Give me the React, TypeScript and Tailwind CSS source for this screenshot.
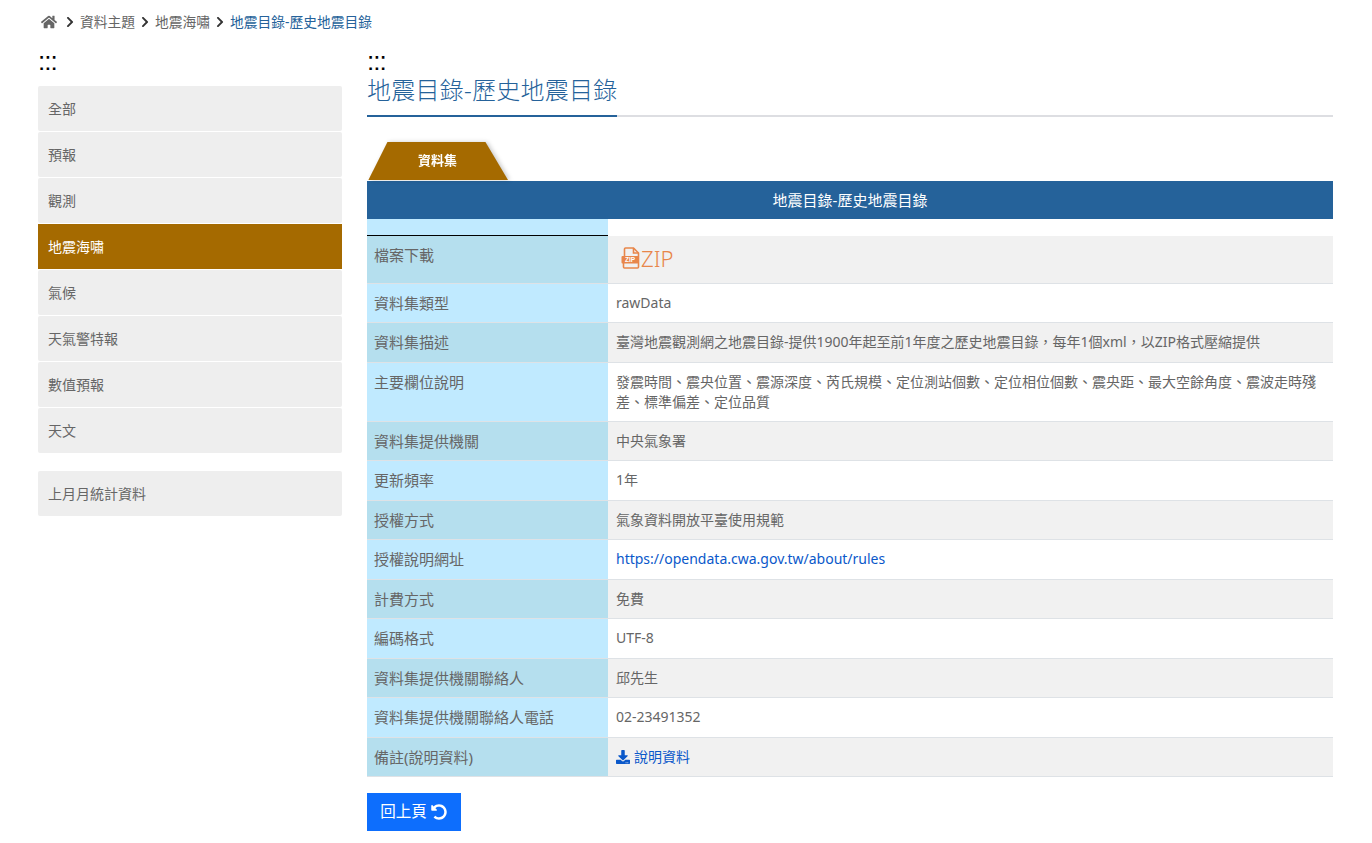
import { FaChevronRight, FaDownload, FaHome, FaUndoAlt } from 'react-icons/fa'

const fontStack = 'font-["Noto_Sans","Noto_Sans_CJK_TC",sans-serif]'

const menuItems = ['全部', '預報', '觀測', '地震海嘯', '氣候', '天氣警特報', '數值預報', '天文']

function Dots() {
  return (
    <div className='h-[22px] pt-[5px] font-["Liberation_Sans",sans-serif] text-[26px] leading-[20px] font-normal tracking-[-1px] text-black'>
      :::
    </div>
  )
}

function ZipIcon() {
  return (
    <svg width="20" height="22" viewBox="0 0 20 22" className="shrink-0">
      <path d="M3.5 9V2a1 1 0 0 1 1-1h8l5 5v14a1 1 0 0 1-1 1h-13a1 1 0 0 1-1-1v-4" fill="none" stroke="#e8864a" strokeWidth="1.6" />
      <path d="M12.5 1v5h5" fill="none" stroke="#e8864a" strokeWidth="1.6" />
      <rect x="0.5" y="9" width="17" height="7.5" rx="1" fill="#e8864a" />
      <text x="9" y="15.2" textAnchor="middle" fontSize="6.5" fontWeight="700" fill="#fff" fontFamily="Liberation Sans">ZIP</text>
    </svg>
  )
}

function Row({ label, odd, h, children }: { label: string; odd: boolean; h: string; children: React.ReactNode }) {
  return (
    <div className={`flex ${h} border-b border-[#dee2e6]`}>
      <div className={`w-[241px] shrink-0 px-[7px] py-[7px] text-[15px] leading-[24px] text-[#666] ${odd ? 'bg-[#b5dfee]' : 'bg-[#c0eaff]'}`}>
        {label}
      </div>
      <div className={`flex-1 px-[8px] py-[9px] text-[14px] leading-[20px] text-[#666] ${odd ? 'bg-[#f1f1f1]' : 'bg-white'}`}>
        {children}
      </div>
    </div>
  )
}

export default function App() {
  return (
    <div className={`${fontStack} h-[843px] overflow-hidden bg-white px-[38px] text-[#666]`}>
      <nav className="flex h-[46px] items-center pb-[2px] pl-[3px] text-[13.75px] text-[#666]">
        <FaHome className="mr-[7px] text-[16px] text-[#666]" />
        <FaChevronRight className="mr-[4px] text-[12px] text-[#333]" />
        <span>資料主題</span>
        <FaChevronRight className="mx-[4px] text-[12px] text-[#333]" />
        <span>地震海嘯</span>
        <FaChevronRight className="mx-[4px] text-[12px] text-[#333]" />
        <span className="text-[#25629a]">地震目錄-歷史地震目錄</span>
      </nav>

      <div className="flex gap-[25px]">
        <aside className="w-[304px] shrink-0">
          <div className="mb-[18px]">
            <Dots />
          </div>
          <ul className="flex flex-col gap-px">
            {menuItems.map((item) => (
              <li
                key={item}
                className={`flex h-[45px] items-center px-[10px] text-[14px] ${
                  item === '地震海嘯' ? 'bg-[#a56a00] text-white' : 'rounded-[2px] bg-[#eeeeee] text-[#666]'
                }`}
              >
                {item}
              </li>
            ))}
          </ul>
          <div className="mt-[18px] flex h-[45px] items-center rounded-[2px] bg-[#eeeeee] px-[10px] text-[14px] text-[#666]">
            上月月統計資料
          </div>
        </aside>

        <main className="w-[966px]">
          <Dots />
          <div className="flex border-b-2 border-[#dddee2]">
            <h1 className="-mb-[2px] h-[49px] w-[250px] border-b-2 border-[#25629a] pt-[7px] text-[24px] leading-[30px] font-light tracking-[0.25px] whitespace-nowrap text-[#25629a]">
              地震目錄-歷史地震目錄
            </h1>
          </div>

          <div className="mt-[25px] h-[38px] w-[143px] drop-shadow-[2px_0_2px_rgba(0,0,0,0.2)]">
            <div className="flex h-full w-[141px] items-center justify-center bg-[#a56a00] text-[13px] font-bold text-white [clip-path:polygon(14.5%_0,84%_0,100%_100%,1%_100%)]">
              資料集
            </div>
          </div>

          <div className="mt-px flex h-[38px] items-center justify-center bg-[#25629a] text-[15px] text-white">
            地震目錄-歷史地震目錄
          </div>
          <div className="flex h-[17px]">
            <div className="w-[241px] border-b border-black bg-[#c0eaff]" />
            <div className="flex-1 bg-white" />
          </div>

          <Row label="檔案下載" odd h="h-[48px]">
            <div className="-mt-[2px] flex items-center pl-[5px] text-[22px] leading-[30px] font-light text-[#e8864a]">
              <ZipIcon />
              <span>ZIP</span>
            </div>
          </Row>
          <Row label="資料集類型" odd={false} h="h-[39px]">rawData</Row>
          <Row label="資料集描述" odd h="h-[40px]">臺灣地震觀測網之地震目錄-提供1900年起至前1年度之歷史地震目錄，每年1個xml，以ZIP格式壓縮提供</Row>
          <Row label="主要欄位說明" odd={false} h="h-[59px]">發震時間、震央位置、震源深度、芮氏規模、定位測站個數、定位相位個數、震央距、最大空餘角度、震波走時殘差、標準偏差、定位品質</Row>
          <Row label="資料集提供機關" odd h="h-[39px]">中央氣象署</Row>
          <Row label="更新頻率" odd={false} h="h-[40px]">1年</Row>
          <Row label="授權方式" odd h="h-[39px]">氣象資料開放平臺使用規範</Row>
          <Row label="授權說明網址" odd={false} h="h-[40px]">
            <a href="#" className="text-[#0a58ca]">https://opendata.cwa.gov.tw/about/rules</a>
          </Row>
          <Row label="計費方式" odd h="h-[39px]">免費</Row>
          <Row label="編碼格式" odd={false} h="h-[40px]">UTF-8</Row>
          <Row label="資料集提供機關聯絡人" odd h="h-[39px]">邱先生</Row>
          <Row label="資料集提供機關聯絡人電話" odd={false} h="h-[40px]">02-23491352</Row>
          <Row label="備註(說明資料)" odd h="h-[39px]">
            <a href="#" className="flex items-center gap-[4px] text-[14px] text-[#0a58ca]">
              <FaDownload className="text-[14px]" />
              說明資料
            </a>
          </Row>

          <button className="mt-[16px] flex h-[38px] w-[94px] items-center justify-center gap-[4px] bg-[#0d6efd] pr-[1px] text-[15.5px] text-white">
            回上頁
            <FaUndoAlt className="text-[16px]" />
          </button>
        </main>
      </div>
    </div>
  )
}
